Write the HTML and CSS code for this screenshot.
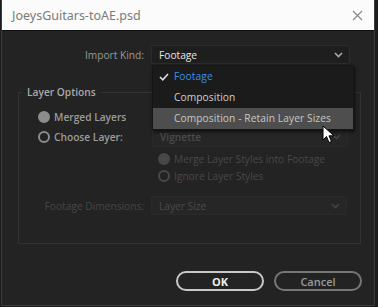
FILE: index.html
```html
<!DOCTYPE html>
<html lang="en">
<head>
    <meta charset="UTF-8">
    <title>JoeysGuitars-toAE.psd</title>
    <link rel="stylesheet" href="styles.css">
</head>
<body>
    <div class="dialog">
        <div class="titlebar">
            <span class="title">JoeysGuitars-toAE.psd</span>
            <svg class="close" width="11" height="11" viewBox="0 0 11 11">
                <path d="M1 1L10 10M10 1L1 10" stroke="#8a8a8a" stroke-width="1.2" fill="none"/>
            </svg>
        </div>

        <div class="content">
            <div class="row kind-row">
                <label class="row-label">Import Kind:</label>
                <div class="select">
                    <span>Footage</span>
                    <svg class="chev" width="9" height="6" viewBox="0 0 9 6"><path d="M1 1L4.5 4.5L8 1" stroke="#aaa" stroke-width="1.6" fill="none"/></svg>
                </div>
                <ul class="menu">
                    <li class="checked">
                        <svg class="check" width="10" height="8" viewBox="0 0 10 8"><path d="M1 4L3.8 6.8L9 1" stroke="#ddd" stroke-width="1.6" fill="none"/></svg>
                        Footage
                    </li>
                    <li>Composition</li>
                    <li class="hover">Composition - Retain Layer Sizes</li>
                </ul>
                <svg class="cursor" width="13" height="19" viewBox="0 0 13 19">
                    <path d="M1 1L1 15L4.5 11.5L7 17.5L9.5 16.5L7 10.8L12 10.8Z" fill="#fff" stroke="#000" stroke-width="1"/>
                </svg>
            </div>

            <fieldset class="group">
                <legend>Layer Options</legend>
                <div class="radio-line">
                    <span class="radio filled"></span>
                    <span>Merged Layers</span>
                </div>
                <div class="radio-line choose">
                    <span class="radio"></span>
                    <span class="choose-label">Choose Layer:</span>
                    <div class="select dim">
                        <span>Vignette</span>
                        <svg class="chev" width="9" height="6" viewBox="0 0 9 6"><path d="M1 1L4.5 4.5L8 1" stroke="#444" stroke-width="1.6" fill="none"/></svg>
                    </div>
                </div>
                <div class="sub-options">
                    <div class="radio-line dimmed">
                        <span class="radio filled"></span>
                        <span>Merge Layer Styles into Footage</span>
                    </div>
                    <div class="radio-line dimmed">
                        <span class="radio"></span>
                        <span>Ignore Layer Styles</span>
                    </div>
                </div>
                <div class="row dims-row">
                    <label class="row-label dimmed">Footage Dimensions:</label>
                    <div class="select dim">
                        <span>Layer Size</span>
                        <svg class="chev" width="9" height="6" viewBox="0 0 9 6"><path d="M1 1L4.5 4.5L8 1" stroke="#444" stroke-width="1.6" fill="none"/></svg>
                    </div>
                </div>
            </fieldset>

            <div class="buttons">
                <button class="btn primary">OK</button>
                <button class="btn">Cancel</button>
            </div>
        </div>
    </div>
</body>
</html>
```

FILE: styles.css
```css
body {
    margin: 0;
    background: #1c1c1c;
    font-family: 'Open Sans', 'Noto Sans', sans-serif;
    font-size: 10.2px;
    color: #b4b4b4;
}

.dialog {
    width: 372px;
    height: 305px;
    background: #232323;
    border: 1px solid #3a3a3a;
    border-top: none;
    margin-left: 1px;
}

.titlebar {
    height: 30px;
    background: #fbfbfb;
    border-bottom: 1px solid #111;
    display: flex;
    align-items: center;
    justify-content: space-between;
    padding: 0 11px 0 10px;
}

.title {
    font-family: 'Noto Sans', sans-serif;
    font-size: 12.5px;
    color: #7a7a7a;
}

.content {
    padding: 14px 12px 0 16px;
}

.row {
    display: flex;
    align-items: center;
}

.row-label {
    flex: none;
    width: 126px;
    text-align: right;
    padding-right: 7px;
    color: #9a9a9a;
}

.kind-row {
    position: relative;
}

.select {
    flex: none;
    width: 190px;
    height: 19px;
    box-sizing: border-box;
    background: #1e1e1e;
    border: 1px solid #2c2c2c;
    border-radius: 2px;
    display: flex;
    align-items: center;
    justify-content: space-between;
    padding: 0 6px 0 7px;
    color: #e6e6e6;
}

.kind-row .select {
    width: 199px;
}

.select.dim {
    width: 196px;
    background: #262626;
    border-color: #2a2a2a;
    color: #4a4a4a;
}

.menu {
    position: absolute;
    left: 134px;
    top: 20px;
    width: 200px;
    margin: 0;
    padding: 0;
    list-style: none;
    background: #1b1b1b;
    border: 1px solid #151515;
    box-shadow: 1px 2px 3px rgba(0, 0, 0, 0.6);
    z-index: 2;
}

.menu li {
    height: 21px;
    line-height: 21px;
    padding-left: 21px;
    color: #cfcfcf;
    position: relative;
    letter-spacing: 0.1px;
}

.menu li.checked {
    color: #3b8ee6;
}

.menu li.hover {
    background: #4e4e4e;
    color: #c8c8c8;
}

.check {
    position: absolute;
    left: 6px;
    top: 7px;
}

.cursor {
    position: absolute;
    left: 304px;
    top: 80px;
    z-index: 3;
}

.group {
    margin: 21px 0 0 0;
    width: 343px;
    height: 159px;
    box-sizing: border-box;
    border: 1px solid #323232;
    padding: 8px 0 0 0;
}

.group legend {
    margin-left: 3px;
    padding: 0 5px;
    color: #a8a8a8;
    font-weight: 600;
}

.radio-line {
    display: flex;
    align-items: center;
    height: 20px;
    padding-left: 19px;
    font-weight: 600;
    color: #9c9c9c;
}

.radio {
    flex: none;
    width: 8px;
    height: 8px;
    border: 2px solid #8c8c8c;
    border-radius: 50%;
    margin-right: 4px;
}

.radio.filled {
    background: #8c8c8c;
}

.choose-label {
    flex: none;
    width: 98px;
}

.sub-options {
    margin: 3px 0 0 139px;
}

.sub-options .radio-line {
    padding-left: 0;
    height: 17px;
    font-weight: normal;
}

.dimmed {
    color: #484848;
}

.dimmed .radio {
    border-color: #484848;
}

.dimmed .radio.filled {
    background: #484848;
}

.dims-row {
    margin-top: 12px;
}

.dims-row .row-label {
    width: 125px;
    color: #474747;
}

.buttons {
    display: flex;
    justify-content: flex-end;
    gap: 10px;
    margin-top: 27px;
}

.btn {
    width: 88px;
    height: 20px;
    border-radius: 10px;
    background: transparent;
    border: 2px solid #777;
    color: #9a9a9a;
    font-family: 'Open Sans', 'Noto Sans', sans-serif;
    font-size: 11px;
    font-weight: 600;
    padding: 0;
}

.btn.primary {
    border-color: #c8c8c8;
    color: #f0f0f0;
    font-weight: 700;
}
```
